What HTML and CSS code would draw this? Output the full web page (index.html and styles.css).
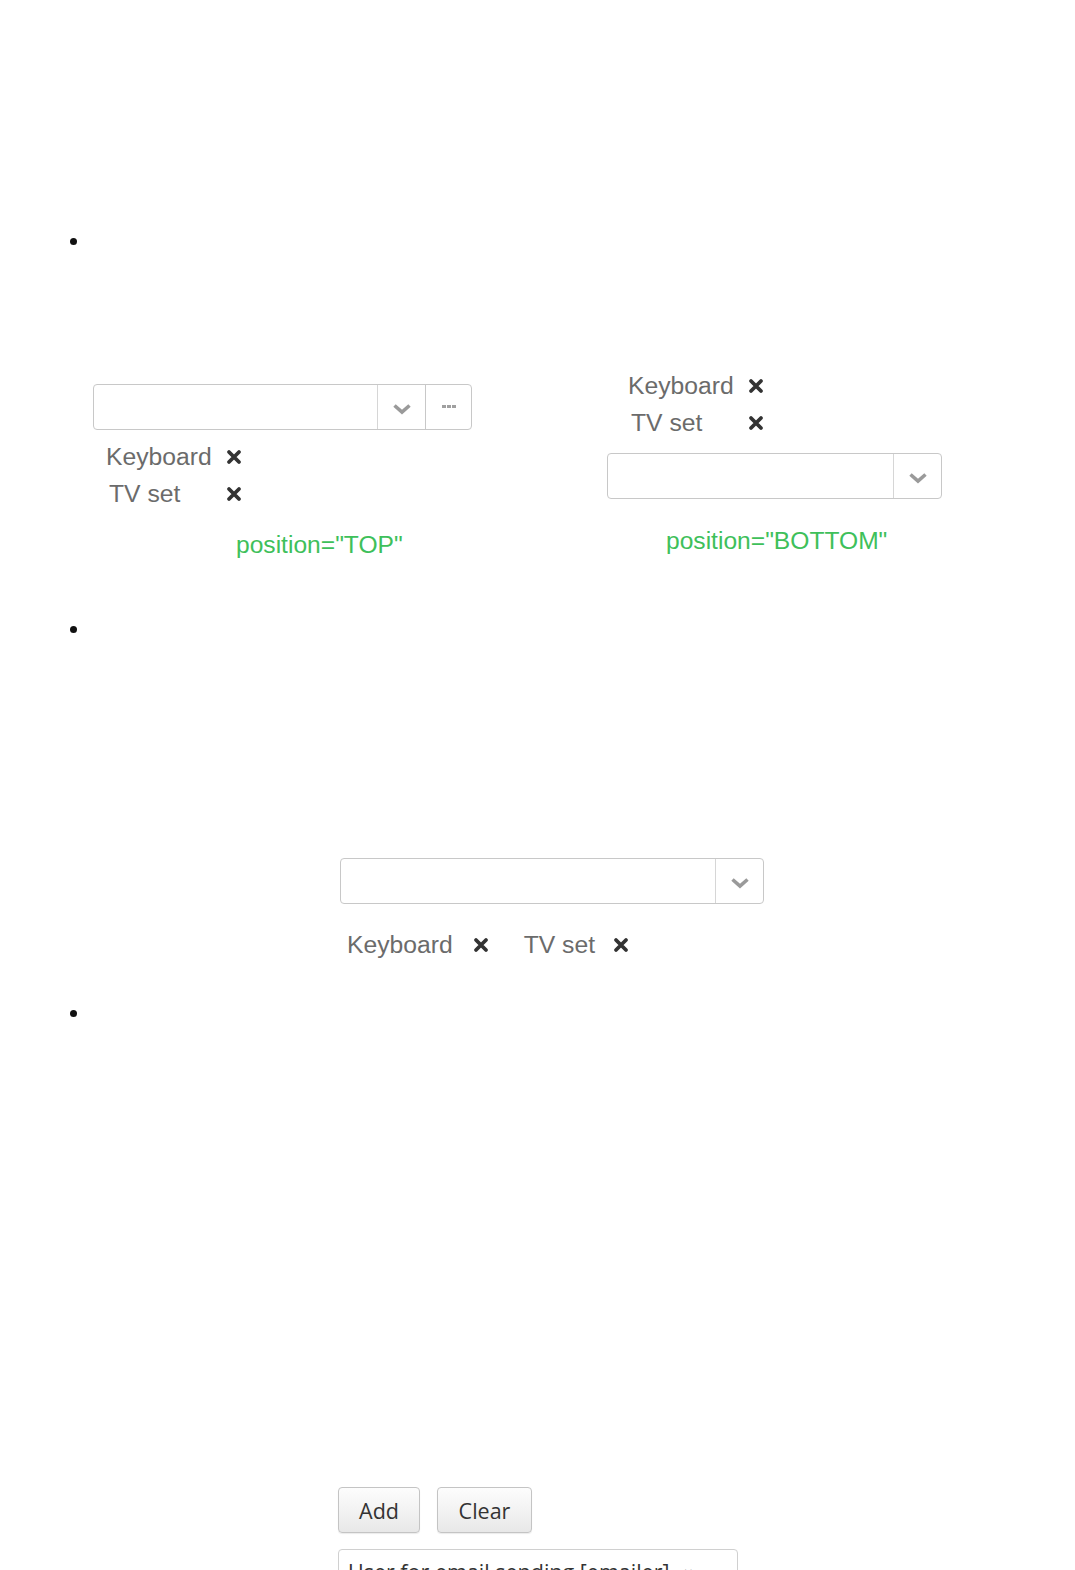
FILE: index.html
```html
<!DOCTYPE html>
<html>
<head>
<meta charset="utf-8">
<link rel="stylesheet" href="styles.css">
</head>
<body>
<ul class="list">
  <li class="item">
    <div class="bullet-row"><span class="bullet"></span></div>
    <div class="demo demo-1">
      <div class="col col-left">
        <div class="combo combo-left">
          <div class="combo-input"></div>
          <div class="combo-btn btn-drop">
            <svg width="20" height="12" viewBox="0 0 20 12"><path d="M2.5 2.5 L10 9 L17.5 2.5" fill="none" stroke="#9a9a9a" stroke-width="3.6" stroke-linejoin="miter"/></svg>
          </div>
          <div class="combo-btn btn-more">
            <span class="dot"></span><span class="dot"></span><span class="dot"></span>
          </div>
        </div>
        <div class="tokens-v tokens-top">
          <div class="token"><span class="tok-label">Keyboard</span><span class="tok-x"><svg width="16" height="16" viewBox="0 0 16 16"><path d="M3 3 L13 13 M13 3 L3 13" stroke="#333" stroke-width="3.8" stroke-linecap="round"/></svg></span></div>
          <div class="token"><span class="tok-label tv">TV set</span><span class="tok-x"><svg width="16" height="16" viewBox="0 0 16 16"><path d="M3 3 L13 13 M13 3 L3 13" stroke="#333" stroke-width="3.8" stroke-linecap="round"/></svg></span></div>
        </div>
        <div class="caption caption-top">position="TOP"</div>
      </div>
      <div class="col col-right">
        <div class="tokens-v tokens-bottom">
          <div class="token"><span class="tok-label">Keyboard</span><span class="tok-x"><svg width="16" height="16" viewBox="0 0 16 16"><path d="M3 3 L13 13 M13 3 L3 13" stroke="#333" stroke-width="3.8" stroke-linecap="round"/></svg></span></div>
          <div class="token"><span class="tok-label tv">TV set</span><span class="tok-x"><svg width="16" height="16" viewBox="0 0 16 16"><path d="M3 3 L13 13 M13 3 L3 13" stroke="#333" stroke-width="3.8" stroke-linecap="round"/></svg></span></div>
        </div>
        <div class="combo combo-right">
          <div class="combo-input"></div>
          <div class="combo-btn btn-drop last">
            <svg width="20" height="12" viewBox="0 0 20 12"><path d="M2.5 2.5 L10 9 L17.5 2.5" fill="none" stroke="#9a9a9a" stroke-width="3.6" stroke-linejoin="miter"/></svg>
          </div>
        </div>
        <div class="caption caption-bottom">position="BOTTOM"</div>
      </div>
    </div>
  </li>
  <li class="item">
    <div class="bullet-row"><span class="bullet"></span></div>
    <div class="demo demo-2">
      <div class="combo combo-mid">
        <div class="combo-input"></div>
        <div class="combo-btn btn-drop last">
          <svg width="20" height="12" viewBox="0 0 20 12"><path d="M2.5 2.5 L10 9 L17.5 2.5" fill="none" stroke="#9a9a9a" stroke-width="3.6" stroke-linejoin="miter"/></svg>
        </div>
      </div>
      <div class="tokens-h">
        <span class="tok-label">Keyboard</span><span class="tok-x x1"><svg width="16" height="16" viewBox="0 0 16 16"><path d="M3 3 L13 13 M13 3 L3 13" stroke="#333" stroke-width="3.8" stroke-linecap="round"/></svg></span>
        <span class="tok-label tv2">TV set</span><span class="tok-x x2"><svg width="16" height="16" viewBox="0 0 16 16"><path d="M3 3 L13 13 M13 3 L3 13" stroke="#333" stroke-width="3.8" stroke-linecap="round"/></svg></span>
      </div>
    </div>
  </li>
  <li class="item">
    <div class="bullet-row"><span class="bullet"></span></div>
    <div class="demo demo-3">
      <div class="buttons">
        <button class="btn btn-add">Add</button>
        <button class="btn btn-clear">Clear</button>
      </div>
      <div class="user-box">
        <span class="user-text">User for email sending [emailer]</span><span class="user-x">✖</span>
      </div>
    </div>
  </li>
</ul>
</body>
</html>
```

FILE: styles.css
```css
html, body {
  margin: 0;
  padding: 0;
  background: #fff;
  height: 1570px;
  overflow: hidden;
}
body {
  font-family: "Liberation Sans", Arial, sans-serif;
}
.list {
  list-style: none;
  margin: 0;
  padding: 0;
}
.bullet-row {
  height: 20px;
  display: flex;
  align-items: center;
  padding-left: 70px;
}
.item:first-child .bullet-row { margin-top: 231px; }
.bullet {
  width: 7px;
  height: 7px;
  border-radius: 50%;
  background: #111;
}
.demo-1 {
  height: 368px;
  display: flex;
  align-items: flex-start;
}
.col-left {
  margin-left: 93px;
  width: 379px;
  padding-top: 133px;
}
.col-right {
  margin-left: 135px;
  width: 335px;
  padding-top: 116px;
}
.combo {
  display: flex;
  height: 46px;
  box-sizing: border-box;
  border: 1px solid #c8c8c8;
  border-radius: 4px;
  background: #fff;
}
.combo-input { flex: 1; }
.combo-btn {
  display: flex;
  align-items: center;
  justify-content: center;
  border-left: 1px solid #d6d6d6;
}
.btn-drop { width: 47px; }
.btn-drop svg { margin-top: 3px; }
.btn-more { width: 45px; gap: 1px; }
.combo-left .btn-more { border-left-color: #c8c8c8; }
.dot {
  width: 4px;
  height: 3px;
  background: #a0a0a0;
  margin-top: -1px;
}
.tokens-v .token {
  display: flex;
  align-items: center;
  height: 37px;
}
.tok-label {
  font-size: 24.7px;
  color: #6b6b6b;
}
.tokens-top { margin-top: 8px; padding-left: 13px; }
.tokens-bottom { padding-left: 21px; }
.tokens-v .tok-label { width: 120px; }
.tokens-v .tok-label.tv { padding-left: 3px; width: 117px; }
.tok-x {
  display: inline-flex;
  align-items: center;
}
.combo-right { margin-top: 12px; }
.caption {
  font-size: 24.6px;
  line-height: 30px;
  color: #3ec05a;
}
.caption-top { margin-top: 18px; padding-left: 143px; }
.caption-bottom { margin-top: 27px; padding-left: 59px; }

.demo-2 {
  height: 364px;
  padding-top: 219px;
  box-sizing: border-box;
}
.combo-mid {
  margin-left: 340px;
  width: 424px;
}
.tokens-h {
  margin-top: 22px;
  margin-left: 347px;
  height: 37px;
  display: flex;
  align-items: center;
}
.tokens-h .x1 { margin-left: 20px; }
.tokens-h .tv2 { margin-left: 35px; }
.tokens-h .x2 { margin-left: 18px; }

.demo-3 {
  padding-top: 464px;
}
.buttons {
  margin-left: 338px;
  display: flex;
  gap: 17px;
}
.btn {
  height: 46px;
  box-sizing: border-box;
  border: 1px solid #c4c4c4;
  border-radius: 4px;
  background: linear-gradient(#fdfdfd, #e8e8e8);
  box-shadow: 0 1px 1px rgba(0,0,0,0.08);
  font-family: "Open Sans", sans-serif;
  font-size: 21.5px;
  color: #333;
  padding: 0;
}
.btn-add { width: 82px; }
.btn-clear { width: 95px; }
.user-box {
  margin-top: 16px;
  margin-left: 338px;
  width: 400px;
  height: 60px;
  box-sizing: border-box;
  border: 1px solid #d0d0d0;
  border-radius: 4px;
  padding: 7px 0 0 9px;
  font-family: "Open Sans", sans-serif;
  font-size: 21.5px;
  line-height: 29px;
  color: #333;
  white-space: nowrap;
}
.user-x {
  margin-left: 12px;
  font-size: 15px;
  color: #333;
}
```
